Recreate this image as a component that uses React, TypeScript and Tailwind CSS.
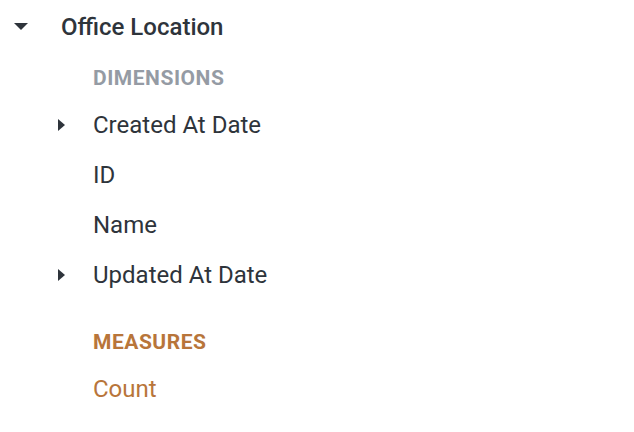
import React from 'react';

const CaretDown = () => (
  <svg width="14" height="8" viewBox="0 0 14 8" className="text-[#2e343b]">
    <path d="M0 0 L14 0 L7 7 Z" fill="currentColor" />
  </svg>
);

const CaretRight = () => (
  <svg width="7" height="12" viewBox="0 0 7 12" className="text-[#2e343b]">
    <path d="M0 0 L7 6 L0 12 Z" fill="currentColor" />
  </svg>
);

const dimensions = [
  { name: 'Created At Date', expandable: true },
  { name: 'ID', expandable: false },
  { name: 'Name', expandable: false },
  { name: 'Updated At Date', expandable: true },
];

const App: React.FC = () => {
  return (
    <div className="w-[634px] h-[432px] bg-white font-['Roboto',sans-serif] text-[#2e343b]">
      <div className="flex items-center h-[54px]">
        <div className="w-[61px] pl-[14px] flex items-center">
          <CaretDown />
        </div>
        <span className="text-[24px] font-medium">Office Location</span>
      </div>

      <div className="pl-[93px]">
        <div className="h-[46px] pt-[4px] flex items-center text-[21px] font-bold text-[#959ba4] tracking-[0.025em]">
          DIMENSIONS
        </div>
        {dimensions.map((d) => (
          <div key={d.name} className="relative h-[50px] flex items-center text-[24px]">
            {d.expandable && (
              <span className="absolute left-[-35px] top-[19px] flex">
                <CaretRight />
              </span>
            )}
            {d.name}
          </div>
        ))}

        <div className="mt-[19px] h-[46px] pt-[2px] flex items-center text-[21px] font-bold text-[#b8753a] tracking-[0.025em]">
          MEASURES
        </div>
        <div className="h-[48px] flex items-center text-[24px] text-[#b8753a]">Count</div>
      </div>
    </div>
  );
};

export default App;
